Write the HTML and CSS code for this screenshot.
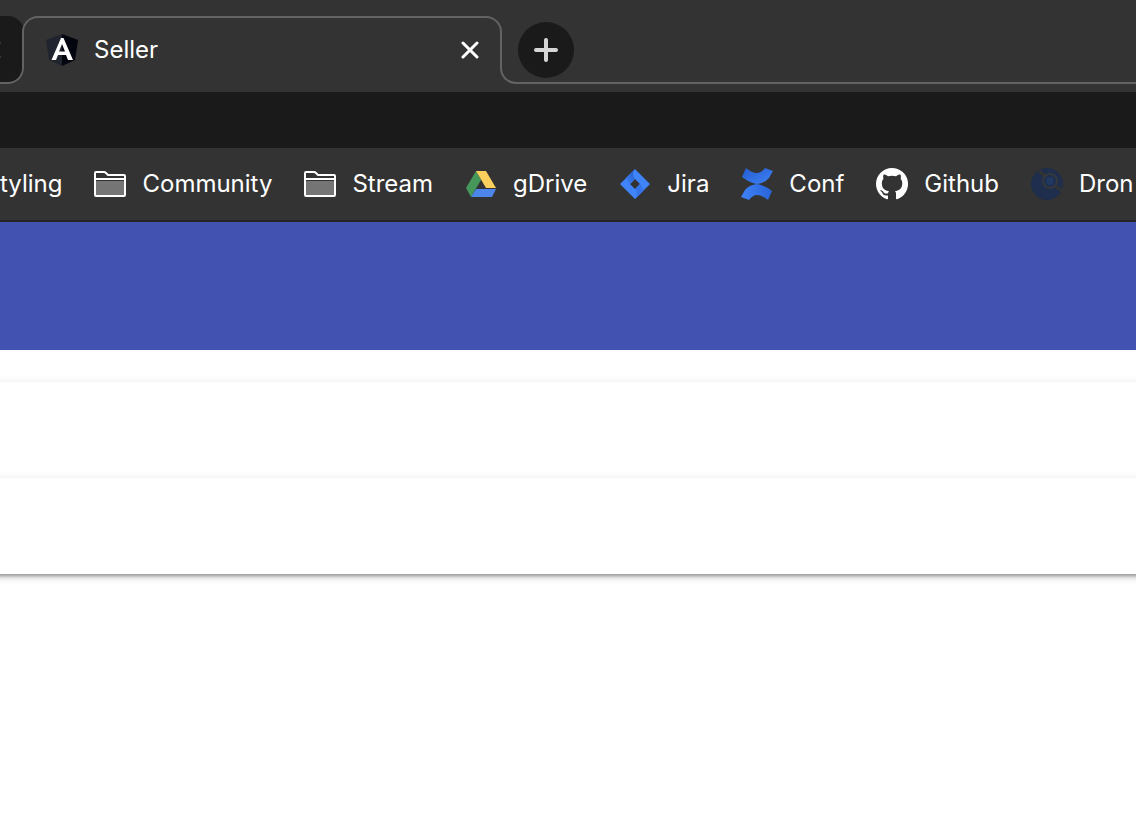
FILE: index.html
```html
<!DOCTYPE html>
<html lang="en">
<head>
<meta charset="utf-8">
<title>Seller</title>
<link rel="stylesheet" href="styles.css">
</head>
<body>
<header class="browser">
  <div class="tab-strip">
    <div class="tab-previous">
      <button class="previous-close" type="button" aria-label="Close previous tab">
        <svg width="18" height="18" viewBox="0 0 18 18"><path d="M2 2 16 16M16 2 2 16" fill="none" stroke="#666" stroke-width="3" stroke-linecap="round"/></svg>
      </button>
    </div>
    <div class="tab-active">
      <svg class="icon" viewBox="0 0 32 32" aria-hidden="true">
        <path d="M16 0 0 6l3 20 13 6z" fill="#20242e"/><path d="m16 0 16 6-3 20-13 6z" fill="#03060f"/>
        <path fill-rule="evenodd" d="M15 4h2.500L27 26h-5l-2-5h-8l-2 5H5.500zM16 10l-3 7.500h6z" fill="#fff"/>
      </svg>
      <span class="tab-title">Seller</span>
      <button class="tab-close" type="button" aria-label="Close tab">
        <svg width="18" height="18" viewBox="0 0 18 18"><path d="M2 2 16 16M16 2 2 16" fill="none" stroke="#fff" stroke-width="3" stroke-linecap="round"/></svg>
      </button>
    </div>
    <div class="tab-rest">
      <button class="new-tab" type="button" aria-label="New tab">
        <svg width="24" height="24" viewBox="0 0 24 24"><path d="M12 2v20M2 12h20" fill="none" stroke="#d6d6d6" stroke-width="4" stroke-linecap="round"/></svg>
      </button>
    </div>
  </div>
  <div class="toolbar"></div>
  <nav class="bookmarks" aria-label="Bookmarks">
    <a class="bookmark" href="#">tyling</a>
    <a class="bookmark" href="#">
      <svg class="icon" viewBox="0 0 32 32" aria-hidden="true"><path d="M2 13h28v14H2z" fill="#757575"/><path d="M1 27V5q0-1 1-1h8q1 0 2 1l2 2h16q1 0 1 1v19q0 1-1 1H2q-1 0-1-1zM1 11h30" fill="none" stroke="#fff" stroke-width="2"/></svg>
      <span>Community</span>
    </a>
    <a class="bookmark" href="#">
      <svg class="icon" viewBox="0 0 32 32" aria-hidden="true"><path d="M2 13h28v14H2z" fill="#757575"/><path d="M1 27V5q0-1 1-1h8q1 0 2 1l2 2h16q1 0 1 1v19q0 1-1 1H2q-1 0-1-1zM1 11h30" fill="none" stroke="#fff" stroke-width="2"/></svg>
      <span>Stream</span>
    </a>
    <a class="bookmark" href="#">
      <svg class="icon" viewBox="0 0 32 32" aria-hidden="true"><path d="M11 3 1 20l5 9 10-17z" fill="#46985a"/><path d="M11 3h10l10 17H21z" fill="#fbd05d"/><path d="m11 21-5 8h21l4-8z" fill="#4c86eb"/></svg>
      <span>gDrive</span>
    </a>
    <a class="bookmark" href="#">
      <svg class="icon" viewBox="0 0 32 32" aria-hidden="true">
        <defs><linearGradient id="jira-top" x1="1" y1="0" x2="0" y2="1"><stop offset="0" stop-color="#2358c4"/><stop offset="1" stop-color="#3c82f6"/></linearGradient></defs>
        <path fill-rule="evenodd" d="M16 1 31 16 16 31 1 16zM16 11l-5 5 5 5 5-5z" fill="#3f84f8"/>
        <path d="M16 1q-4 5 0 10L11 16 7 10z" fill="url(#jira-top)"/>
        <path d="M16 31q4-5 0-10L21 16l4 6z" fill="#3474e6"/>
      </svg>
      <span>Jira</span>
    </a>
    <a class="bookmark" href="#">
      <svg class="icon" viewBox="0 0 32 32" aria-hidden="true">
        <defs>
          <linearGradient id="conf-top" x1="1" y1="1" x2="0" y2="0"><stop offset="0" stop-color="#3e83f7"/><stop offset="1" stop-color="#255cce"/></linearGradient>
          <linearGradient id="conf-bottom"><stop offset="0" stop-color="#3e83f7"/><stop offset="1" stop-color="#2864d8"/></linearGradient>
        </defs>
        <path d="M5 0 1 9q8 6 15 7 8-1 12-6l4-7-8-3q-4 5-8 5-5 0-11-5z" fill="url(#conf-top)"/>
        <path d="m27 32 4-9q-8-6-15-7-8 1-12 6l-4 7 8 3q4-5 8-5 5 0 11 5z" fill="url(#conf-bottom)"/>
      </svg>
      <span>Conf</span>
    </a>
    <a class="bookmark" href="#">
      <svg class="icon" viewBox="0 0 16 16" aria-hidden="true"><path fill="#fff" d="M8 0C3.580 0 0 3.580 0 8c0 3.540 2.290 6.530 5.470 7.590.4.070.55-.17.55-.38 0-.19-.01-.82-.01-1.490-2.010.37-2.530-.49-2.690-.94-.09-.23-.48-.94-.82-1.130-.28-.15-.68-.52-.01-.53.63-.01 1.080.58 1.230.82.720 1.210 1.870.87 2.330.66.070-.52.280-.87.510-1.070-1.780-.2-3.640-.89-3.640-3.950 0-.87.310-1.590.82-2.150-.08-.2-.36-1.020.08-2.120 0 0 .67-.21 2.200.82.640-.18 1.320-.27 2-.27s1.360.09 2 .27c1.530-1.040 2.200-.82 2.200-.82.440 1.100.16 1.920.08 2.120.51.560.82 1.270.82 2.150 0 3.070-1.870 3.750-3.650 3.950.29.25.54.73.54 1.480 0 1.070-.01 1.930-.01 2.200 0 .21.15.46.55.38A8 8 0 0 0 8 0z"/></svg>
      <span>Github</span>
    </a>
    <a class="bookmark" href="#">
      <svg class="icon" viewBox="0 0 32 32" aria-hidden="true"><circle cx="16" cy="16" r="16" fill="#1e2e4c"/><path d="m8 3 6 5M24 18l9 6" stroke="#333" stroke-width="3"/><circle cx="19" cy="13" r="7" fill="none" stroke="#35383f" stroke-width="2"/><circle cx="19" cy="13" r="4" fill="#213861"/></svg>
      <span>Dron</span>
    </a>
  </nav>
</header>
<main class="page">
  <div class="app-bar"></div>
  <div class="accordion">
    <section class="panel"></section>
    <section class="panel"></section>
  </div>
</main>
</body>
</html>
```

FILE: styles.css
```css
* { box-sizing: border-box; }
body {
  margin: 0;
  background: #fff;
  font-family: Inter, "Liberation Sans", sans-serif;
  font-size: 24px;
  line-height: 32px;
}
button {
  display: flex;
  align-items: center;
  justify-content: center;
  padding: 0;
  border: 0;
  background: none;
}
svg { display: block; flex: none; }
.icon { width: 32px; height: 32px; }
.browser { color: #fff; background: #333; overflow: hidden; }
.tab-strip { display: flex; height: 92px; padding: 16px 0 8px; }
.tab-previous {
  position: relative;
  display: flex;
  align-items: center;
  justify-content: flex-end;
  flex: none;
  width: 24px;
  background: #1a1a1a;
  border-radius: 0 16px 16px 0;
}
.tab-previous::after, .tab-rest::after {
  content: "";
  position: absolute;
  inset: 34px 0 0;
  border-bottom: 2px solid #636363;
  pointer-events: none;
}
.tab-previous::after { border-right: 2px solid #636363; border-bottom-right-radius: 16px; }
.tab-rest::after { border-left: 2px solid #636363; border-bottom-left-radius: 16px; }
.previous-close { margin-right: 23px; }
.tab-active {
  position: relative;
  display: flex;
  align-items: center;
  gap: 16px;
  flex: none;
  width: 480px;
  margin-left: -2px;
  padding: 0 23px 0 24px;
}
.tab-active::before {
  content: "";
  position: absolute;
  inset: 0 0 34px;
  border: 2px solid #636363;
  border-bottom: 0;
  border-radius: 16px 16px 0 0;
  pointer-events: none;
}
.tab-title { flex: 1; }
.tab-rest {
  position: relative;
  display: flex;
  align-items: center;
  flex: 1;
  margin-left: -2px;
  padding-left: 18px;
}
.new-tab { width: 56px; height: 56px; border-radius: 50%; background: #1a1a1a; }
.toolbar { height: 56px; background: #1a1a1a; }
.bookmarks {
  display: flex;
  align-items: center;
  gap: 32px;
  height: 74px;
  border-bottom: 2px solid #252525;
}
.bookmark {
  display: flex;
  align-items: center;
  gap: 16px;
  flex: none;
  color: inherit;
  text-decoration: none;
}
.page { padding-bottom: 32px; overflow: hidden; }
.app-bar { height: 128px; background: #4152b0; }
.accordion { margin: 0 -16px; padding-top: 32px; }
.panel {
  position: relative;
  height: 96px;
  background: #fff;
  box-shadow: 0 6px 2px -4px rgba(0, 0, 0, .2), 0 4px 4px rgba(0, 0, 0, .14), 0 2px 10px rgba(0, 0, 0, .12);
}
```
